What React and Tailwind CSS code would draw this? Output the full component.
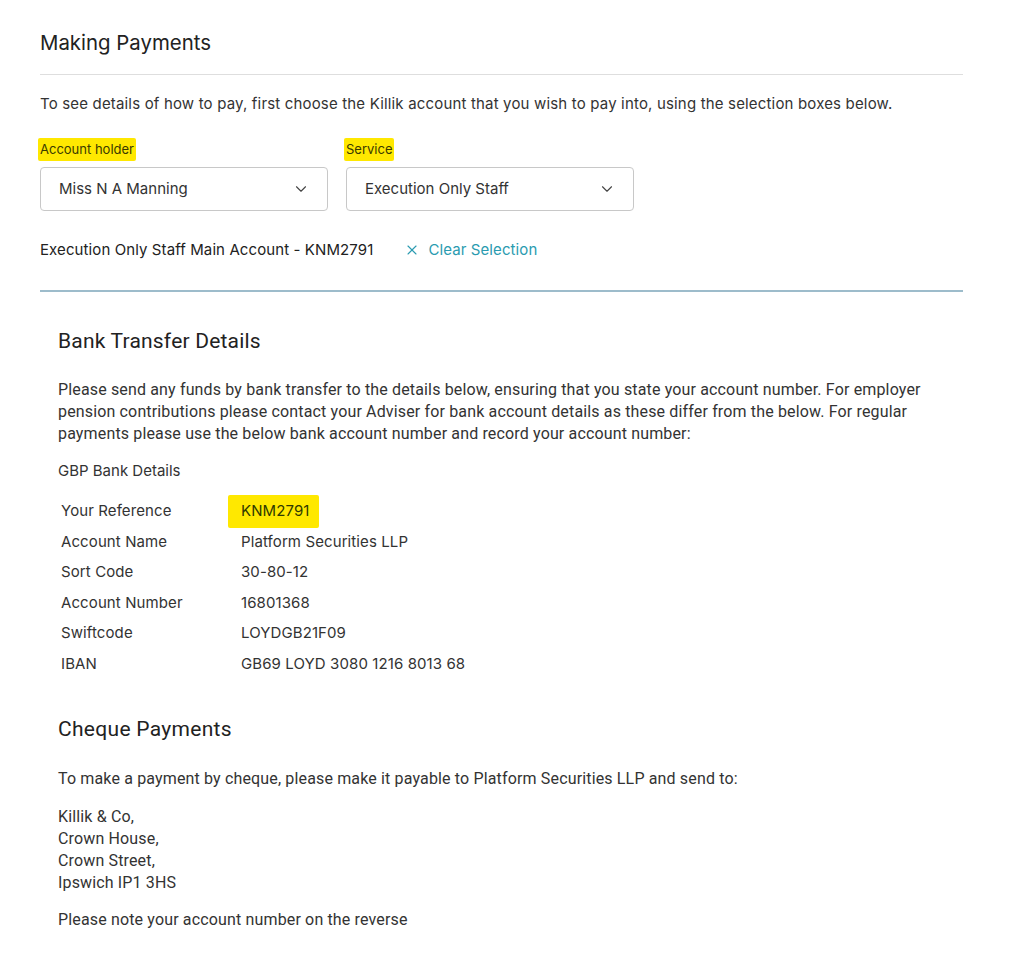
import { ChevronDown, X } from 'lucide-react'

const inter = { fontFamily: 'Inter, "Noto Sans", sans-serif' }
const roboto = { fontFamily: 'Roboto, "Noto Sans", sans-serif' }

const rows = [
  ['Your Reference', 'KNM2791', true],
  ['Account Name', 'Platform Securities LLP'],
  ['Sort Code', '30-80-12'],
  ['Account Number', '16801368'],
  ['Swiftcode', 'LOYDGB21F09'],
  ['IBAN', 'GB69 LOYD 3080 1216 8013 68'],
]

const Select = ({ label, value }) => (
  <div className="flex w-[288px] flex-col">
    <span className="-ml-[2px] mb-[6px] w-fit rounded-[2px] bg-[#ffe800] px-[2px] py-[2px] text-[13px] leading-[19px] text-[#3a3a00]">
      {label}
    </span>
    <div className="flex h-[44px] items-center justify-between rounded-[4px] border border-[#c8c8c8] pl-[18px] pr-[17px] text-[15px] text-[#333]">
      <span>{value}</span>
      <ChevronDown size={18} strokeWidth={1.5} className="text-[#444]" />
    </div>
  </div>
)

export default function App() {
  return (
    <div className="min-h-screen bg-white px-[40px] pt-[28px] text-[#222]" style={inter}>
      <div className="w-[923px]">
        <h1 className="text-[20.4px] leading-[30px] text-[#222]">Making Payments</h1>
        <div className="mt-[16px] h-px bg-[#dedede]" />
        <p className="mt-[18px] text-[15px] leading-[22px] tracking-[0.17px] text-[#333]">
          To see details of how to pay, first choose the Killik account that you wish to pay into, using the selection boxes below.
        </p>

        <div className="mt-[23px] flex gap-[18px]">
          <Select label="Account holder" value="Miss N A Manning" />
          <Select label="Service" value="Execution Only Staff" />
        </div>

        <div className="mt-[28px] flex items-center gap-[31px] text-[15px] leading-[22px] tracking-[0.1px]">
          <span className="text-[#222]">Execution Only Staff Main Account - KNM2791</span>
          <span className="flex items-center gap-[8px] text-[#2a9bb0]">
            <X size={16} strokeWidth={1.6} />
            Clear Selection
          </span>
        </div>

        <div className="mt-[29px] h-[2px] bg-[#9dbccb]" />

        <div className="px-[18px]" style={roboto}>
          <h2 className="mt-[35px] text-[21px] leading-[28px] tracking-[0.2px] text-[#222]">Bank Transfer Details</h2>
          <p className="mt-[24px] text-[16px] leading-[22px] tracking-[0.15px] text-[#333]">
            Please send any funds by bank transfer to the details below, ensuring that you state your account number. For employer pension contributions please contact your Adviser for bank account details as these differ from the below. For regular payments please use the below bank account number and record your account number:
          </p>
          <div className="mt-[15px] text-[15px] leading-[22px] text-[#333]" style={inter}>GBP Bank Details</div>

          <div className="mt-[14px] flex flex-col pl-[3px] text-[15px] tracking-[0.1px] text-[#333]" style={inter}>
            {rows.map(([k, v, hl]) => (
              <div key={k} className="flex h-[30.6px] items-center">
                <span className="w-[180px]">{k}</span>
                {hl ? (
                  <span className="-ml-[13px] rounded-[2px] bg-[#ffe800] py-[5px] pl-[13px] pr-[9px] text-[#2f3a00]">{v}</span>
                ) : (
                  <span>{v}</span>
                )}
              </div>
            ))}
          </div>

          <h2 className="mt-[35px] text-[21px] leading-[28px] tracking-[0.3px] text-[#222]">Cheque Payments</h2>
          <p className="mt-[25px] text-[16px] leading-[22px] tracking-[0.15px] text-[#333]">
            To make a payment by cheque, please make it payable to Platform Securities LLP and send to:
          </p>
          <p className="mt-[16px] text-[16px] leading-[22px] tracking-[0.15px] text-[#333]">
            Killik &amp; Co,
            <br />
            Crown House,
            <br />
            Crown Street,
            <br />
            Ipswich IP1 3HS
          </p>
          <p className="mt-[15px] pb-[40px] text-[16px] leading-[22px] tracking-[0.15px] text-[#333]">Please note your account number on the reverse</p>
        </div>
      </div>
    </div>
  )
}
